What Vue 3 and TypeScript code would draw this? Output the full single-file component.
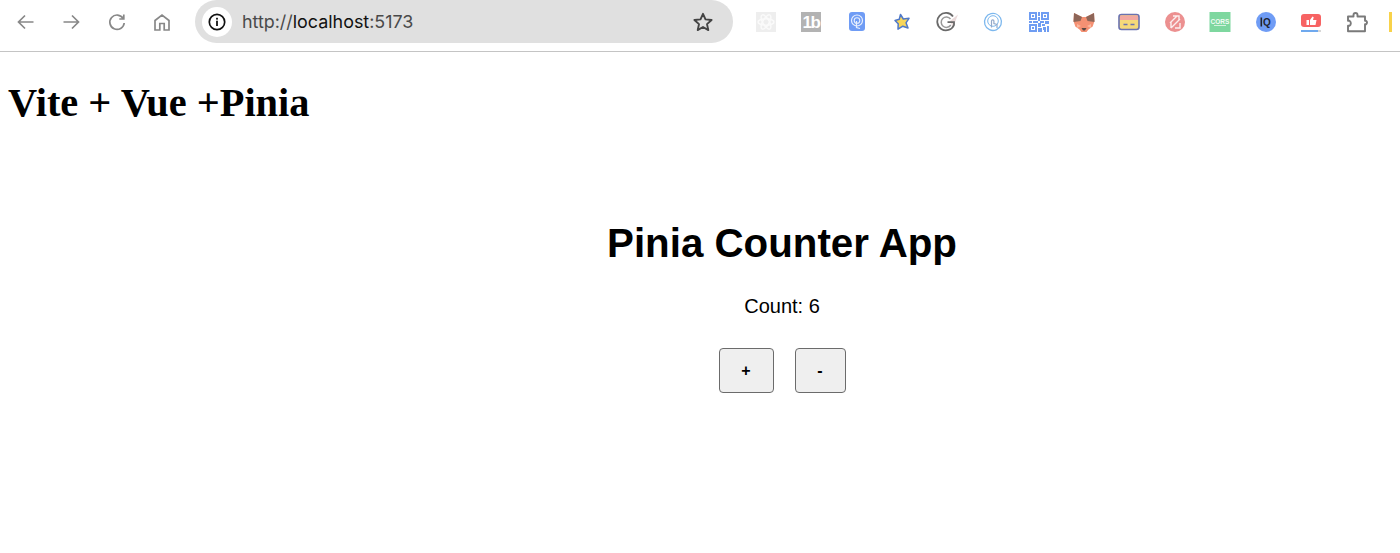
<script setup lang="ts">
import { ref } from 'vue'

const count = ref<number>(6)
</script>

<template>
  <div class="page">
    <header class="toolbar">
      <nav class="nav">
        <svg class="nav-icon" viewBox="0 0 22 22"><path d="M18.5 11H4M10 4.5 3.5 11l6.500 6.500" /></svg>
        <svg class="nav-icon" viewBox="0 0 22 22"><path d="M3.500 11H18M12 4.500 18.500 11 12 17.500" /></svg>
        <svg class="nav-icon" viewBox="0 0 22 22"><path d="M17.200 7.500A7.200 7.200 0 1 0 18.200 12M17.800 3.500v4.500h-4.500" /></svg>
        <svg class="nav-icon" viewBox="0 0 22 22"><path d="M4 9.500 11 4l7 5.500V19h-4.800v-6.500H8.800V19H4z" /></svg>
      </nav>

      <div class="omnibox">
        <span class="info">
          <svg viewBox="0 0 20 20" width="20" height="20">
            <circle cx="10" cy="10" r="7.700" fill="none" stroke="#111" stroke-width="1.700" />
            <rect x="9.100" y="8.700" width="1.800" height="5.300" fill="#111" />
            <rect x="9.100" y="5.800" width="1.800" height="1.800" fill="#111" />
          </svg>
        </span>
        <span class="url"><span class="dim">http://</span>localhost<span class="dim">:5173</span></span>
        <svg class="star" viewBox="0 0 22 22" width="22" height="22">
          <path d="M11 2.800l2.500 5.600 6.100.600-4.600 4.100 1.300 6-5.300-3.100-5.300 3.100 1.300-6L2.400 9l6.100-.600z" fill="none" stroke="#444" stroke-width="1.900" stroke-linejoin="round" />
        </svg>
      </div>

      <div class="extensions">
        <svg class="ext" viewBox="0 0 24 24">
          <rect x="2" y="2" width="20" height="20" fill="#eeeeee" />
          <g fill="none" stroke="#fafafa" stroke-width="1.500">
            <ellipse cx="12" cy="12" rx="8" ry="3.200" />
            <ellipse cx="12" cy="12" rx="8" ry="3.200" transform="rotate(60 12 12)" />
            <ellipse cx="12" cy="12" rx="8" ry="3.200" transform="rotate(120 12 12)" />
          </g>
        </svg>
        <svg class="ext" viewBox="0 0 24 24">
          <rect x="2" y="2" width="20" height="20" fill="#b3b3b3" />
          <text x="12" y="18" text-anchor="middle" class="ext-text ext-tb">1b</text>
        </svg>
        <svg class="ext" viewBox="0 0 24 24">
          <rect x="4" y="2" width="16" height="19" rx="3" fill="#6f9cf5" />
          <circle cx="12" cy="10.500" r="5.500" fill="none" stroke="#e8effd" stroke-width="1.200" />
          <circle cx="12" cy="10.500" r="2.800" fill="none" stroke="#e8effd" stroke-width="1.100" />
          <path d="M11.500 11v6.500l3.500 1" fill="none" stroke="#e8effd" stroke-width="1.200" />
        </svg>
        <svg class="ext" viewBox="0 0 24 24">
          <path d="M10.500 4.500l2.800 4.500 5.700-.700-3 4.500 2 5.200-5.200-1.800-4.800 3 .200-5.400L5 10.500l4.300-1.200z" fill="#f8d65a" stroke="#4f78c9" stroke-width="1.500" stroke-linejoin="round" />
        </svg>
        <svg class="ext" viewBox="0 0 24 24">
          <path d="M22 4.500l-5 13-3-6.500z" fill="#eadada" />
          <g fill="none">
            <path d="M17 6.500A8.700 8.700 0 1 0 18 15v-2.800h-6.500" stroke="#6a6a6a" stroke-width="1.800" />
            <path d="M14.500 9A5.200 5.200 0 1 0 14.800 15" stroke="#999" stroke-width="1.500" />
          </g>
        </svg>
        <svg class="ext" viewBox="0 0 24 24">
          <g fill="none" stroke="#7db8ee">
            <path d="M19.500 8A8.500 8.500 0 1 1 10 3.700a8.500 8.500 0 0 1 9.500 4.300" stroke-width="1.300" />
            <circle cx="12" cy="11" r="5.300" stroke-width="1" />
            <path d="M10.500 17.500v-6.500a1.200 1.200 0 0 1 2.400 0v2.500l3.100 1v3.500" stroke-width="1.200" stroke="#94a9c9" />
          </g>
        </svg>
        <svg class="ext" viewBox="0 0 24 24" fill="#6f9df2">
          <path fill-rule="evenodd" d="M2 2h8v8H2zm2 2v4h4V4zM14 2h8v8h-8zm2 2v4h4V4zM2 14h8v8H2zm2 2v4h4v-4z" />
          <path d="M5 5h2v2H5zM17 5h2v2h-2zM5 17h2v2H5zM11 2h2v4h-2zM11 7h2v4h-2zM2 11h3v2H2zM6 11h5v2H6zM13 11h4v2h-4zM18 11h4v3h-4zM11 13h3v4h-3zM15 14h3v2h-3zM11 18h4v4h-4zM16 17h3v3h-3zM20 16h2v6h-2zM17 20h2v2h-2z" />
        </svg>
        <svg class="ext" viewBox="0 0 24 24">
          <path d="M2 3l8 4h4l8-4 .500 8-1.800 5.500-4.200 3-2 2.500h-5l-2-2.500-4.200-3L1.500 11z" fill="#f59173" />
          <path d="M2 3l8 4-1.500 4-7 1zM22 3l-8 4 1.500 4 7 1z" fill="#8e6658" />
          <path d="M9.500 18h5l-1.500 2.500h-2z" fill="#5c4a44" />
          <path d="M5 14l4 2-4 2zM19 14l-4 2 4 2z" fill="#fbb79e" />
        </svg>
        <svg class="ext" viewBox="0 0 24 24">
          <rect x="2" y="4.500" width="20" height="15" rx="2.500" fill="#f4d979" stroke="#6a72b0" stroke-width="1.600" />
          <path d="M3 5.500h18v4.500H3z" fill="#f2a8a0" />
          <path d="M6.500 14.500h4M13.500 14.500h4" stroke="#6a72b0" stroke-width="1.400" />
        </svg>
        <svg class="ext" viewBox="0 0 24 24">
          <circle cx="12" cy="12" r="10" fill="#ec9090" />
          <path d="M7 13l7-7v0M10 6h6v5M8 18v-6M8 18l9-9M12 18h5v-5" fill="none" stroke="#fbeeee" stroke-width="1.400" />
        </svg>
        <svg class="ext" viewBox="0 0 24 24">
          <rect x="1.500" y="2" width="21" height="20" fill="#7ed79f" />
          <text x="12" y="13.500" text-anchor="middle" class="ext-text ext-cors">CORS</text>
          <rect x="6" y="15" width="12" height="1" fill="#d3f1de" />
        </svg>
        <svg class="ext" viewBox="0 0 24 24">
          <circle cx="12" cy="12" r="10" fill="#6f9cf5" />
          <path d="M6.500 7.500h1.600v9H6.500z" fill="#20242e" />
          <text x="13" y="15.500" text-anchor="middle" class="ext-text ext-iq">Q</text>
        </svg>
        <svg class="ext" viewBox="0 0 24 24">
          <rect x="2" y="4" width="20" height="13" rx="3" fill="#f76363" />
          <path d="M7.500 10h2.500v5H7.500zM11 15v-5l2.500-3.500 1.200.800-.700 2.700h3.500l-1 5z" fill="#fff" />
          <rect x="2" y="20" width="17" height="2" fill="#6fa9ee" />
          <rect x="19" y="20" width="3" height="2" fill="#d7d7d7" />
        </svg>
        <svg class="ext" viewBox="0 0 24 24">
          <path d="M3 6.500h5.500V5a2 2 0 0 1 4 0v1.500H20v4.300h1a2 2 0 0 1 0 3.500h-1v7H3v-5.500h1.500a3 3 0 0 0 0-5H3z" fill="none" stroke="#7a7a7a" stroke-width="1.900" stroke-linejoin="round" />
        </svg>
        <span class="edge-mark"></span>
      </div>
    </header>

    <main class="content">
      <h1 class="title">Vite + Vue +Pinia</h1>
      <section class="counter">
        <h2 class="counter-title">Pinia Counter App</h2>
        <p class="count">Count: {{ count }}</p>
        <div class="actions">
          <button class="btn btn-plus" type="button" @click="count++">+</button>
          <button class="btn btn-minus" type="button" @click="count--">-</button>
        </div>
      </section>
    </main>
  </div>
</template>

<style>
html,
body {
  margin: 0;
  background: #fff;
}
</style>

<style scoped>
.page {
  width: 1400px;
  height: 553px;
  overflow: hidden;
  background: #fff;
}

.toolbar {
  display: flex;
  align-items: center;
  box-sizing: border-box;
  height: 52px;
  padding: 0 0 8px 15px;
  border-bottom: 1px solid #c4c4c4;
}

.nav {
  display: flex;
  gap: 23.300px;
}

.nav-icon {
  width: 22px;
  height: 22px;
  fill: none;
  stroke: #888;
  stroke-width: 1.700;
}

.omnibox {
  display: flex;
  align-items: center;
  box-sizing: border-box;
  width: 538px;
  height: 43px;
  margin-left: 22px;
  padding: 0 19px 0 7px;
  border-radius: 22px;
  background: #e0e0e0;
}

.info {
  display: flex;
  align-items: center;
  justify-content: center;
  width: 30px;
  height: 30px;
  border-radius: 50%;
  background: #fff;
}

.url {
  margin-left: 10px;
  font-family: "Inter", "Liberation Sans", sans-serif;
  font-size: 17.900px;
  color: #111;
}

.dim {
  color: #4a4a4a;
}

.star {
  margin-left: auto;
}

.extensions {
  display: flex;
  align-items: center;
  gap: 21.450px;
  margin-left: 21px;
}

.ext {
  flex: none;
  width: 24px;
  height: 24px;
}

.ext-text {
  font-family: "Liberation Sans", sans-serif;
  font-weight: 700;
}

.ext-tb {
  font-size: 17px;
  letter-spacing: -1.500px;
  fill: #fff;
}

.ext-cors {
  font-size: 6.500px;
  fill: #f2fbf5;
}

.ext-iq {
  font-size: 10px;
  fill: #20242e;
}

.edge-mark {
  flex: none;
  width: 3px;
  height: 20px;
  margin-left: -1px;
  background: #f8d24a;
}

.content {
  display: flow-root;
}

.title {
  margin: 28px 0 0 8px;
  font-family: "Liberation Serif", "Times New Roman", serif;
  font-size: 40.400px;
  line-height: 46px;
  font-weight: 700;
  color: #000;
}

.counter {
  margin: 95px 0 0 164px;
  text-align: center;
  font-family: "Liberation Sans", Arial, sans-serif;
  color: #000;
}

.counter-title {
  margin: 0;
  font-size: 40.300px;
  line-height: 46px;
  font-weight: 700;
}

.count {
  margin: 28px 0 0;
  font-size: 20px;
  line-height: 23px;
}

.actions {
  display: flex;
  justify-content: center;
  gap: 21px;
  margin-top: 30px;
}

.btn {
  box-sizing: border-box;
  height: 45px;
  padding: 0;
  border: 1px solid #6b6b6b;
  border-radius: 4px;
  background: #efefef;
  color: #000;
  font-family: "Liberation Sans", Arial, sans-serif;
  font-size: 16px;
  font-weight: 700;
}

.btn-plus {
  width: 55px;
}

.btn-minus {
  width: 51px;
}
</style>
